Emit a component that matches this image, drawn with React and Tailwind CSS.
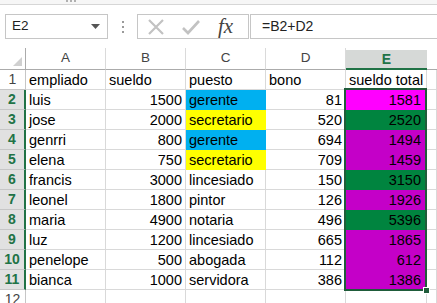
import React from "react";

const rows = [
  ["luis", 1500, "gerente", 81, 1581, "blue", "pink"],
  ["jose", 2000, "secretario", 520, 2520, "yellow", "green"],
  ["genrri", 800, "gerente", 694, 1494, "blue", "purple"],
  ["elena", 750, "secretario", 709, 1459, "yellow", "purple"],
  ["francis", 3000, "lincesiado", 150, 3150, "none", "green"],
  ["leonel", 1800, "pintor", 126, 1926, "none", "purple"],
  ["maria", 4900, "notaria", 496, 5396, "none", "green"],
  ["luz", 1200, "lincesiado", 665, 1865, "none", "purple"],
  ["penelope", 500, "abogada", 112, 612, "none", "purple"],
  ["bianca", 1000, "servidora", 386, 1386, "none", "purple"],
];

const cFill = {
  blue: "bg-[#00b0f0] border-[#00b0f0]",
  yellow: "bg-[#ffff00] border-[#ffff00]",
  none: "bg-white border-[#d9d9d9]",
};

const eFill = {
  pink: "bg-[#ff00ff] border-[#ff00ff] text-[#a11fb8]",
  green: "bg-[#00843f] border-[#00843f] text-[#0e4d2a]",
  purple: "bg-[#c400c8] border-[#c400c8] text-[#8a2bb0]",
};

const cell =
  "h-[20px] border-r border-b flex items-end leading-[18px] text-[14.5px] text-black overflow-hidden whitespace-nowrap";

function RowHead({ n, sel }) {
  return (
    <div
      className={
        sel
          ? "h-[20px] border-b border-b-[#c6c6c6] border-r-2 border-r-[#217346] bg-[#e1e1e1] flex items-center justify-center text-[14px] font-bold text-[#217346]"
          : "h-[20px] border-b border-r border-[#c6c6c6] bg-white flex items-center justify-center text-[14px] text-[#444]"
      }
    >
      {n}
    </div>
  );
}

export default function App() {
  return (
    <div
      className="w-[437px] h-[303px] overflow-hidden bg-white relative"
      style={{ fontFamily: '"Liberation Sans", Arial, sans-serif' }}
    >
      {/* top strip */}
      <div className="h-[5px] border-b border-[#d6d6d6] bg-[#f6f6f6] flex items-start pl-[66px] gap-[2px]">
        <span className="w-[2px] h-[2px] bg-[#b0b0b0]" />
        <span className="w-[2px] h-[2px] bg-[#b0b0b0]" />
        <span className="w-[2px] h-[2px] bg-[#b0b0b0]" />
      </div>

      {/* toolbar */}
      <div className="h-[43px] pt-[9px] flex items-start">
        <div className="ml-[5px] w-[103px] h-[25px] border border-[#c6c6c6] flex items-center justify-between pl-[6px] pr-[7px]">
          <span className="text-[13.5px] text-[#222]">E2</span>
          <svg width="9" height="5" viewBox="0 0 9 5">
            <path d="M0 0 L9 0 L4.5 5 Z" fill="#555" />
          </svg>
        </div>
        <div className="w-[29px] h-[25px] flex flex-col items-center justify-center gap-[3px]">
          <span className="w-[2px] h-[2px] bg-[#9a9a9a]" />
          <span className="w-[2px] h-[2px] bg-[#9a9a9a]" />
          <span className="w-[2px] h-[2px] bg-[#9a9a9a]" />
        </div>
        <div className="w-[112px] h-[25px] border border-[#c6c6c6] flex items-center pl-[9px]">
          <svg width="18" height="18" viewBox="0 0 18 18">
            <path d="M2 2 L16 16 M16 2 L2 16" stroke="#c2c2c2" strokeWidth="2.2" />
          </svg>
          <svg width="20" height="18" viewBox="0 0 20 18" className="ml-[16px]">
            <path d="M2 10 L7 15 L18 3" stroke="#c2c2c2" strokeWidth="2.6" fill="none" />
          </svg>
          <span
            className="ml-[17px] text-[21px] italic text-[#444] leading-none"
            style={{ fontFamily: '"Liberation Serif", "Times New Roman", serif' }}
          >
            fx
          </span>
        </div>
        <div className="flex-1 h-[25px] border-y border-r-0 border-l border-[#c6c6c6] ml-[1px] flex items-center pl-[11px]">
          <span className="text-[14px] text-[#222]">=B2+D2</span>
        </div>
      </div>

      {/* grid */}
      <div className="grid grid-cols-[26px_80px_80px_80px_80px_81px_1fr]">
        {/* header row */}
        <div className="h-[22px] border-b border-r border-[#ababab] bg-white flex items-end justify-end pr-[3px] pb-[3px]">
          <svg width="9" height="9" viewBox="0 0 9 9">
            <path d="M9 0 L9 9 L0 9 Z" fill="#d0d0d0" />
          </svg>
        </div>
        {["A", "B", "C", "D"].map((l) => (
          <div
            key={l}
            className="h-[22px] border-b border-b-[#ababab] border-r border-r-[#dadada] bg-white flex items-center justify-center text-[13.5px] text-[#444]"
          >
            {l}
          </div>
        ))}
        <div className="h-[22px] pt-[2px]">
          <div className="h-[20px] border-b-2 border-[#217346] bg-[#d6d9d7] flex items-center justify-center text-[14px] font-bold text-[#217346]">
            E
          </div>
        </div>
        <div className="h-[22px] border-b border-[#ababab] bg-white" />

        {/* row 1 */}
        <RowHead n={1} />
        <div className={cell + " border-[#d9d9d9] pl-[3px]"}>empliado</div>
        <div className={cell + " border-[#d9d9d9] pl-[3px]"}>sueldo</div>
        <div className={cell + " border-[#d9d9d9] pl-[3px]"}>puesto</div>
        <div className={cell + " border-[#d9d9d9] pl-[3px]"}>bono</div>
        <div className={cell + " border-[#d9d9d9] pl-[3px]"}>sueldo total</div>
        <div className={cell + " border-[#d9d9d9]"} />

        {rows.map((r, i) => (
          <React.Fragment key={i}>
            <RowHead n={i + 2} sel />
            <div className={cell + " border-[#d9d9d9] pl-[3px]"}>{r[0]}</div>
            <div className={cell + " border-[#d9d9d9] justify-end pr-[3px]"}>{r[1]}</div>
            <div className={cell + " pl-[3px] " + cFill[r[5]]}>{r[2]}</div>
            <div className={cell + " border-[#d9d9d9] justify-end pr-[3px]"}>{r[3]}</div>
            <div className={cell + " justify-end pr-[5px] " + eFill[r[6]]}>{r[4]}</div>
            <div className={cell + " border-[#d9d9d9]"} />
          </React.Fragment>
        ))}

        {/* row 12 */}
        <RowHead n={12} />
        <div className={cell + " border-[#d9d9d9]"} />
        <div className={cell + " border-[#d9d9d9]"} />
        <div className={cell + " border-[#d9d9d9]"} />
        <div className={cell + " border-[#d9d9d9]"} />
        <div className={cell + " border-[#d9d9d9]"} />
        <div className={cell + " border-[#d9d9d9]"} />
      </div>

      {/* selection overlay */}
      <div className="absolute left-[344px] top-[88px] w-[83px] h-[203px] border-2 border-[#1f5c3a] pointer-events-none" />
      <div className="absolute left-[423px] top-[287px] w-[7px] h-[7px] bg-[#1f5c3a] border border-white" />
    </div>
  );
}
